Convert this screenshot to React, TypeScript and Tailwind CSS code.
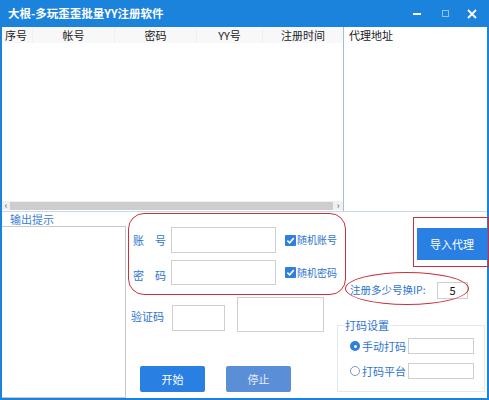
import React from "react";

const Check = () => (
  <span className="w-[11px] h-[11px] shrink-0 bg-[#2f7fdc] flex items-center justify-center rounded-[1px]">
    <svg width="9" height="9" viewBox="0 0 10 10">
      <path d="M1.5 5.2 L4 7.6 L8.6 2.4" stroke="white" strokeWidth="1.8" fill="none" />
    </svg>
  </span>
);

export default function App() {
  const cols = [
    { t: "序号", w: "w-[31px]", a: "justify-start pl-[3px]" },
    { t: "帐号", w: "w-[82px]", a: "justify-center" },
    { t: "密码", w: "w-[82px]", a: "justify-center" },
    { t: "YY号", w: "w-[66px]", a: "justify-center" },
    { t: "注册时间", w: "flex-1", a: "justify-center" },
  ];
  return (
    <div className="w-[489px] h-[400px] flex flex-col bg-white overflow-hidden font-['Noto_Sans_CJK_SC',sans-serif] text-[11px] leading-none whitespace-nowrap">
      {/* title bar */}
      <div className="h-[27px] shrink-0 bg-[#1c83dd] flex items-center pl-[8px] text-white">
        <span className="flex-1 font-bold text-[11.5px]">大根-多玩歪歪批量YY注册软件</span>
        <div className="flex items-center h-full">
          <span className="w-[28px] flex justify-center">
            <span className="w-[8px] h-[2px] bg-white" />
          </span>
          <span className="w-[28px] flex justify-center">
            <span className="w-[7px] h-[7px] border border-[#8fc3f0]" />
          </span>
          <span className="w-[30px] flex justify-center pr-[4px]">
            <svg width="10" height="10" viewBox="0 0 10 10">
              <path d="M1 1 L9 9 M9 1 L1 9" stroke="white" strokeWidth="1.8" />
            </svg>
          </span>
        </div>
      </div>

      <div className="flex-1 flex flex-col border-x-2 border-b-2 border-[#1c83dd]">
        {/* top lists */}
        <div className="h-[185px] shrink-0 flex border-b border-[#c9d7e8]">
          <div className="w-[342px] flex flex-col border-r border-[#a9bcd6]">
            <div className="h-[16px] flex bg-[#f8f8f8] text-[#222]">
              {cols.map((c, i) => (
                <div key={i} className={`${c.w} flex items-center ${c.a} ${i < 4 ? "border-r border-[#f0f0f0]" : ""}`}>
                  {c.t}
                </div>
              ))}
            </div>
            <div className="flex-1" />
            <div className="h-[9px] flex items-center bg-[#f0f0f0] mb-[1px]">
              <span className="w-[8px] text-[9px] text-[#555] flex justify-center">‹</span>
              <span className="flex-1 h-[8px] bg-[#cdcdcd]" />
              <span className="w-[10px] text-[9px] text-[#555] flex justify-center">›</span>
            </div>
          </div>
          <div className="flex-1 flex flex-col">
            <div className="h-[16px] flex items-center pl-[5px] text-[#222]">代理地址</div>
          </div>
        </div>

        {/* bottom */}
        <div className="flex-1 flex">
          {/* output */}
          <div className="w-[124px] flex flex-col">
            <div className="h-[14px] flex items-center pl-[8px] text-[#3a80d8]">输出提示</div>
            <div className="flex-1 border border-[#c8c8c8] border-l-0" />
          </div>

          {/* middle form */}
          <div className="w-[211px] relative flex flex-col pl-[2px]">
            <div className="absolute left-[2px] top-[1px] w-[218px] h-[82px] rounded-[16px] border-[1.5px] border-[#c9313d]" />
            <div className="h-[15px]" />
            <div className="flex items-center h-[26px]">
              <span className="w-[44px] pl-[5px] text-[#2d74d0] flex gap-[11px]"><span>账</span><span>号</span></span>
              <span className="w-[105px] h-[26px] shrink-0 border border-[#cfcfcf]" />
              <span className="ml-[9px] flex items-center gap-[1px] text-[#2d74d0] text-[10px]"><Check />随机账号</span>
            </div>
            <div className="flex items-center h-[25px] mt-[7px]">
              <span className="w-[44px] pl-[5px] text-[#2d74d0] flex gap-[11px] pt-[6px]"><span>密</span><span>码</span></span>
              <span className="w-[105px] h-[25px] shrink-0 border border-[#cfcfcf]" />
              <span className="ml-[9px] flex items-center gap-[1px] text-[#2d74d0] text-[10px]"><Check />随机密码</span>
            </div>
            <div className="flex items-center h-[35px] mt-[12px]">
              <span className="w-[44px] pl-[3px] text-[#2d74d0] pt-[3px]">验证码</span>
              <span className="w-[53px] h-[26px] border border-[#cfcfcf] mt-[7px]" />
              <span className="ml-[12px] w-[87px] h-[35px] border border-[#cfcfcf]" />
            </div>
            <div className="flex mt-[34px] pl-[12px] gap-[21px]">
              <span className="w-[65px] h-[26px] rounded-[2px] bg-[#2a7fe2] text-white flex items-center justify-center">开始</span>
              <span className="w-[65px] h-[26px] rounded-[2px] bg-[#5a8fd8] text-[#e4edf9] flex items-center justify-center">停止</span>
            </div>
          </div>

          {/* right settings */}
          <div className="flex-1 flex flex-col">
            <div className="h-[16px]" />
            <div className="relative flex justify-end">
              <div className="absolute left-[76px] top-[-11px] w-[76px] h-[50px] border-[1.5px] border-[#c9313d]" />
              <span className="w-[70px] h-[32px] bg-[#2a7fe2] text-white flex items-center justify-center">导入代理</span>
            </div>
            <div className="relative flex items-center h-[18px] mt-[21px] pl-[13px]">
              <div className="absolute left-[8px] top-[-9px] w-[124px] h-[33px] rounded-[50%] border-[1.5px] border-[#c9313d]" />
              <span className="w-[87px] text-[#2d74d0] text-[10.5px]">注册多少号换IP:</span>
              <span className="w-[31px] h-[17px] border border-[#cfcfcf] flex items-center justify-center text-[#111]">5</span>
            </div>
            <div className="mt-[26px] w-[148px] h-[67px] border border-[#e3e9f0] relative flex flex-col">
              <span className="absolute left-[7px] top-[-6px] bg-white text-[#2d74d0] pr-[1px]">打码设置</span>
              <div className="flex items-center mt-[12px] pl-[12px]">
                <span className="w-[10px] h-[10px] rounded-full bg-[#2f7fdc] flex items-center justify-center">
                  <span className="w-[3px] h-[3px] rounded-full bg-white" />
                </span>
                <span className="ml-[2px] w-[46px] text-[#2d74d0]">手动打码</span>
                <span className="w-[66px] h-[16px] border border-[#cfcfcf]" />
              </div>
              <div className="flex items-center mt-[9px] pl-[12px]">
                <span className="w-[10px] h-[10px] rounded-full border border-[#7d9bc4] bg-white" />
                <span className="ml-[2px] w-[46px] text-[#2d74d0]">打码平台</span>
                <span className="w-[66px] h-[16px] border border-[#cfcfcf]" />
              </div>
            </div>
          </div>
        </div>
      </div>
    </div>
  );
}
